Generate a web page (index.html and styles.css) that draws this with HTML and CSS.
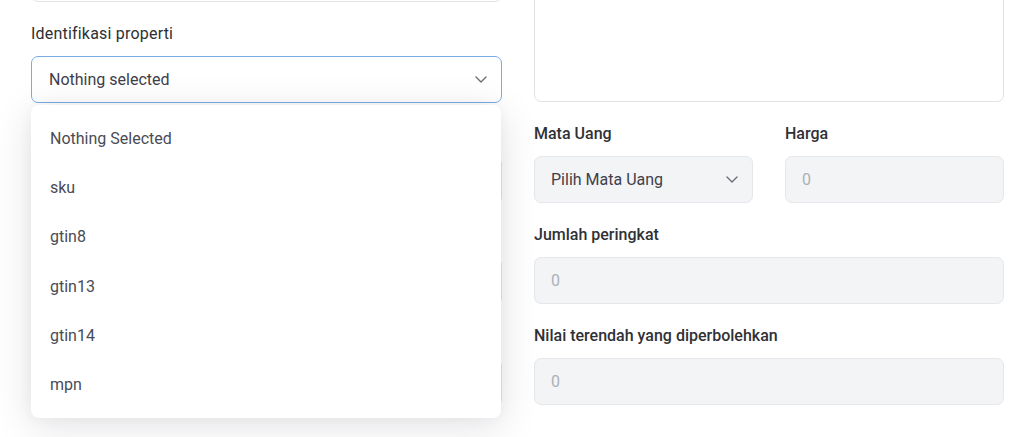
FILE: index.html
```html
<!DOCTYPE html>
<html lang="id">
<head>
<meta charset="utf-8">
<title>Form</title>
<link rel="stylesheet" href="styles.css">
</head>
<body>
<div class="form">
  <div class="col">
    <div class="field">
      <div class="input input-white"></div>
    </div>
    <div class="field">
      <div class="label label-plain">Identifikasi properti</div>
      <div class="select-wrap">
        <div class="select select-open">
          <span>Nothing selected</span>
          <svg class="chev" width="12" height="7" viewBox="0 0 12 7"><path d="M1 1l5 5 5-5" fill="none" stroke="#6b6e78" stroke-width="1.4" stroke-linecap="round" stroke-linejoin="round"/></svg>
        </div>
        <ul class="menu">
          <li>Nothing Selected</li>
          <li>sku</li>
          <li>gtin8</li>
          <li>gtin13</li>
          <li>gtin14</li>
          <li>mpn</li>
        </ul>
      </div>
    </div>
    <div class="field">
      <div class="label-blank"></div>
      <div class="input"></div>
    </div>
    <div class="field">
      <div class="label-blank"></div>
      <div class="input"></div>
    </div>
    <div class="field">
      <div class="label-blank"></div>
      <div class="input"></div>
    </div>
  </div>
  <div class="col">
    <div class="field">
      <div class="textarea"></div>
    </div>
    <div class="field pair">
      <div class="sub">
        <div class="label">Mata Uang</div>
        <div class="select">
          <span>Pilih Mata Uang</span>
          <svg class="chev" width="12" height="7" viewBox="0 0 12 7"><path d="M1 1l5 5 5-5" fill="none" stroke="#6b6e78" stroke-width="1.4" stroke-linecap="round" stroke-linejoin="round"/></svg>
        </div>
      </div>
      <div class="sub">
        <div class="label">Harga</div>
        <div class="input"><span class="ph">0</span></div>
      </div>
    </div>
    <div class="field">
      <div class="label">Jumlah peringkat</div>
      <div class="input"><span class="ph">0</span></div>
    </div>
    <div class="field">
      <div class="label">Nilai terendah yang diperbolehkan</div>
      <div class="input"><span class="ph">0</span></div>
    </div>
  </div>
</div>
</body>
</html>
```

FILE: styles.css
```css
* { box-sizing: border-box; }
html, body { margin: 0; padding: 0; background: #fff; overflow: hidden; }
body {
  font-family: Roboto, "Noto Sans", Arial, sans-serif;
  color: #2f3033;
  width: 1025px;
  height: 437px;
}
.form {
  display: grid;
  grid-template-columns: 471px 470px;
  column-gap: 32px;
  padding-left: 31px;
  margin-top: -45px;
}
.col { display: flex; flex-direction: column; }
.field { margin-bottom: 21px; }
.pair { display: grid; grid-template-columns: 1fr 1fr; column-gap: 32px; }
.label {
  font-size: 16px;
  line-height: 22px;
  font-weight: 500;
  color: #303136;
  margin-bottom: 11px;
}
.label-plain { font-weight: 400; color: #2e2f33; letter-spacing: 0.2px; }
.label-blank { height: 22px; margin-bottom: 11px; }
.input {
  height: 47px;
  background: #f3f4f6;
  border: 1px solid #e6e7eb;
  border-radius: 7px;
  display: flex;
  align-items: center;
  padding-left: 16px;
}
.input-white { background: #fff; border-color: #e3e4e8; }
.ph { font-size: 16px; color: #adb0b8; }
.textarea {
  height: 147px;
  background: #fff;
  border: 1px solid #e1e2e6;
  border-radius: 7px;
}
.select-wrap { position: relative; }
.select {
  height: 47px;
  background: #f3f4f6;
  border: 1px solid #e6e7eb;
  border-radius: 7px;
  display: flex;
  align-items: center;
  justify-content: space-between;
  padding: 0 14px 0 16px;
  font-size: 16px;
  color: #3f404a;
}
.select-open {
  background: #fff;
  border-color: #79ace3;
  padding: 0 14px 0 17px;
}
.chev { display: block; }
.menu {
  position: absolute;
  top: calc(100% + 2px);
  left: 0;
  right: 1px;
  margin: 0;
  padding: 9px 0;
  list-style: none;
  background: #fff;
  border-radius: 8px;
  box-shadow: 0 8px 40px rgba(20, 20, 40, 0.12), 0 0 14px rgba(20, 20, 40, 0.04);
  z-index: 10;
}
.menu li {
  height: 49.2px;
  display: flex;
  align-items: center;
  padding-left: 19px;
  font-size: 16px;
  color: #4a4b55;
}
```
